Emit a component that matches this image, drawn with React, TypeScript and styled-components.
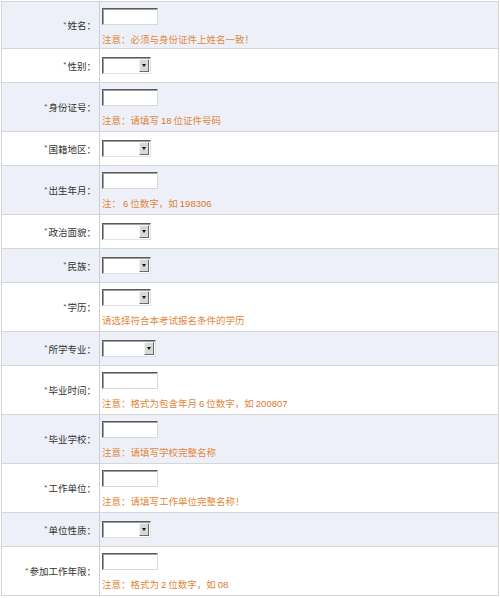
import React from 'react';
import styled, {createGlobalStyle} from 'styled-components';

const GlobalStyle = createGlobalStyle`
  html, body {
    margin: 0;
    padding: 0;
    background: #ffffff;
  }
  body {
    font-family: "Noto Sans CJK SC", "Liberation Sans", sans-serif;
  }
`;

const Form = styled.div`
  margin: 1px 1px 0 1px;
  border: 1px solid #d4d4d4;
  border-bottom: none;
`;

const Row = styled.div<{$tall?: boolean; $shaded?: boolean; $first?: boolean}>`
  display: grid;
  grid-template-columns: 98px 1fr;
  box-sizing: border-box;
  height: ${p => (p.$tall ? (p.$first ? 47 : 49) : 34)}px;
  background: ${p => (p.$shaded ? '#eef0f9' : '#ffffff')};
  border-bottom: 1px solid #d6d6d6;
`;

const Label = styled.div`
  display: flex;
  align-items: center;
  justify-content: flex-end;
  padding-right: 3px;
  border-right: 1px solid #cfcfcf;
  font-size: 9.5px;
  color: #333333;
  white-space: nowrap;
`;

const Star = styled.span`
  font-family: "Liberation Sans", sans-serif;
  font-size: 8px;
  color: #555555;
  margin-right: 1px;
  position: relative;
  top: -1px;
`;

const Field = styled.div<{$tall?: boolean}>`
  display: flex;
  flex-direction: column;
  justify-content: ${p => (p.$tall ? 'flex-start' : 'center')};
  padding: ${p => (p.$tall ? '6px 0 0 2px' : '0 0 0 2px')};
`;

const TextBox = styled.input`
  box-sizing: border-box;
  width: 56px;
  height: 17px;
  margin: 0;
  padding: 0 2px;
  background: #ffffff;
  border: 1px solid;
  border-color: #5a5a5a #d9d9d9 #d9d9d9 #5a5a5a;
  box-shadow: inset 1px 1px 0 #a0a0a0;
  outline: none;
`;

const Select = styled.div<{$w: number}>`
  box-sizing: border-box;
  width: ${p => p.$w}px;
  height: 17px;
  display: flex;
  justify-content: flex-end;
  background: #ffffff;
  border: 1px solid;
  border-color: #5a5a5a #e2e2e2 #e2e2e2 #5a5a5a;
  box-shadow: inset 1px 1px 0 #a0a0a0;
  padding: 1px;
`;

const ArrowBtn = styled.div`
  box-sizing: border-box;
  width: 10px;
  height: 100%;
  background: #d8d8d8;
  border: 1px solid;
  border-color: #f4f4f4 #6a6a6a #6a6a6a #f4f4f4;
  display: flex;
  align-items: center;
  justify-content: center;

  &::after {
    content: '';
    width: 0;
    height: 0;
    border-left: 2.5px solid transparent;
    border-right: 2.5px solid transparent;
    border-top: 3px solid #111111;
  }
`;

const Note = styled.div`
  margin-top: 8px;
  font-size: 9.5px;
  line-height: 12px;
  color: #e2873a;
  white-space: nowrap;
`;

const Num = styled.span`
  font-family: "Liberation Sans", sans-serif;
  font-size: 9.5px;
  color: #d9792a;
  margin: 0 2px;
`;

type Item = {
  label: string;
  kind: 'text' | 'select';
  selectWidth?: number;
  note?: React.ReactNode;
};

const items: Item[] = [
  {label: '姓名', kind: 'text', note: '注意：必须与身份证件上姓名一致！'},
  {label: '性别', kind: 'select'},
  {
    label: '身份证号',
    kind: 'text',
    note: (
      <>
        注意：请填写<Num>18</Num>位证件号码
      </>
    ),
  },
  {label: '国籍地区', kind: 'select'},
  {
    label: '出生年月',
    kind: 'text',
    note: (
      <>
        注：<Num>6</Num>位数字，如<Num>198306</Num>
      </>
    ),
  },
  {label: '政治面貌', kind: 'select'},
  {label: '民族', kind: 'select'},
  {label: '学历', kind: 'select', note: '请选择符合本考试报名条件的学历'},
  {label: '所学专业', kind: 'select', selectWidth: 54},
  {
    label: '毕业时间',
    kind: 'text',
    note: (
      <>
        注意：格式为包含年月<Num>6</Num>位数字，如<Num>200807</Num>
      </>
    ),
  },
  {label: '毕业学校', kind: 'text', note: '注意：请填写学校完整名称'},
  {label: '工作单位', kind: 'text', note: '注意：请填写工作单位完整名称！'},
  {label: '单位性质', kind: 'select'},
  {
    label: '参加工作年限',
    kind: 'text',
    note: (
      <>
        注意：格式为<Num>2</Num>位数字，如<Num>08</Num>
      </>
    ),
  },
];

export default function App() {
  return (
    <>
      <GlobalStyle />
      <Form>
        {items.map((it, i) => {
          const tall = !!it.note;
          return (
            <Row key={it.label} $tall={tall} $shaded={i % 2 === 0} $first={i === 0}>
              <Label>
                <Star>*</Star>
                {it.label}：
              </Label>
              <Field $tall={tall}>
                {it.kind === 'text' ? (
                  <TextBox type='text' />
                ) : (
                  <Select $w={it.selectWidth ?? 49}>
                    <ArrowBtn />
                  </Select>
                )}
                {it.note && <Note>{it.note}</Note>}
              </Field>
            </Row>
          );
        })}
      </Form>
    </>
  );
}
